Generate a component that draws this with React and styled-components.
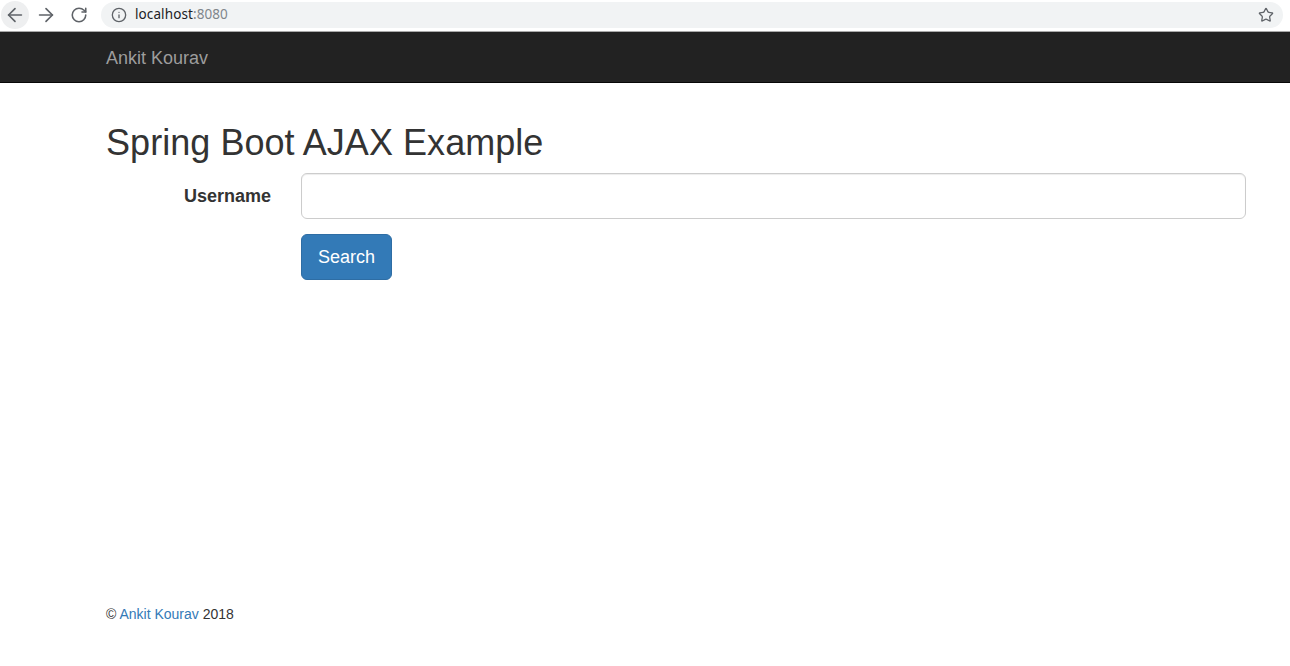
import React from 'react';
import styled, { createGlobalStyle } from 'styled-components';
import { ArrowLeft, ArrowRight, RotateCw, Info, Star } from 'lucide-react';

const GlobalStyle = createGlobalStyle`
    html, body {
        margin: 0;
        padding: 0;
        background: #fff;
    }
    body {
        font-family: "Liberation Sans", Arial, sans-serif;
        font-size: 14px;
        line-height: 1.42857143;
        color: #333;
    }
    * {
        box-sizing: border-box;
    }
`;

const Page = styled.div`
    min-height: 100vh;
    display: flex;
    flex-direction: column;
`;

const BrowserBar = styled.div`
    height: 32px;
    display: flex;
    align-items: center;
    gap: 3px;
    padding: 0 7px 1px 1px;
    background: #fff;
    border-bottom: 1px solid #a9a9a9;
`;

const NavButton = styled.div`
    width: 28px;
    height: 28px;
    border-radius: 50%;
    display: flex;
    align-items: center;
    justify-content: center;
    color: #5f6368;
    flex-shrink: 0;
    background: ${(p) => (p.$active ? '#eeeff0' : 'transparent')};
    margin-left: ${(p) => p.$gap || 0}px;
`;

const Omnibox = styled.div`
    flex: 1;
    height: 26px;
    margin-left: 5px;
    border-radius: 13px;
    background: #f1f3f4;
    display: flex;
    align-items: center;
    padding: 0 9px 0 10px;
    color: #5f6368;
`;

const Url = styled.span`
    flex: 1;
    margin-left: 8px;
    font-family: "Noto Sans", "Open Sans", sans-serif;
    font-size: 13.5px;
    color: #202124;
    letter-spacing: 0.1px;
`;

const Port = styled.span`
    color: #80868b;
`;

const Navbar = styled.nav`
    height: 51px;
    background: #222;
    border-bottom: 1px solid #080808;
    margin-bottom: 20px;
`;

const Container = styled.div`
    width: 1170px;
    margin-left: 91px;
    padding: 0 15px;
`;

const Brand = styled.a`
    display: inline-block;
    padding: 16px 0 14px;
    font-size: 18px;
    line-height: 20px;
    color: #9d9d9d;
    text-decoration: none;
`;

const Main = styled.main`
    flex: 1;
`;

const Title = styled.h1`
    margin: 20px 0 10px;
    font-size: 36px;
    font-weight: 500;
    line-height: 1.1;
    color: #333;
    letter-spacing: 0.05px;
`;

const FormGroup = styled.div`
    display: grid;
    grid-template-columns: 195px 1fr;
    margin: 0 -15px 15px;
`;

const Label = styled.label`
    padding: 11px 15px 0;
    text-align: right;
    font-size: 18px;
    font-weight: 700;
    line-height: 1.3333333;
`;

const Field = styled.div`
    grid-column: 2;
    padding: 0 15px;
`;

const Input = styled.input`
    display: block;
    width: 100%;
    height: 46px;
    padding: 10px 16px;
    font-family: inherit;
    font-size: 18px;
    line-height: 1.3333333;
    color: #555;
    background: #fff;
    border: 1px solid #ccc;
    border-radius: 6px;
    box-shadow: inset 0 1px 1px rgba(0, 0, 0, 0.075);
    outline: none;
`;

const Button = styled.button`
    display: inline-block;
    padding: 10px 16px;
    font-family: inherit;
    font-size: 18px;
    line-height: 1.3333333;
    color: #fff;
    background: #337ab7;
    border: 1px solid #2e6da4;
    border-radius: 6px;
    cursor: pointer;
`;

const Footer = styled.footer`
    padding-bottom: 42px;
    line-height: 20px;
`;

const Link = styled.a`
    color: #337ab7;
    text-decoration: none;
`;

const App = () => (
    <Page>
        <GlobalStyle />
        <BrowserBar>
            <NavButton $active>
                <ArrowLeft size={22} strokeWidth={1.8} />
            </NavButton>
            <NavButton>
                <ArrowRight size={22} strokeWidth={1.8} />
            </NavButton>
            <NavButton $gap={2}>
                <RotateCw size={18} strokeWidth={2.1} />
            </NavButton>
            <Omnibox>
                <Info size={16} strokeWidth={2} />
                <Url>
                    localhost<Port>:8080</Port>
                </Url>
                <Star size={16} strokeWidth={1.9} />
            </Omnibox>
        </BrowserBar>

        <Navbar>
            <Container>
                <Brand href="#">Ankit Kourav</Brand>
            </Container>
        </Navbar>

        <Main>
            <Container>
                <Title>Spring Boot AJAX Example</Title>
                <form onSubmit={(e) => e.preventDefault()}>
                    <FormGroup>
                        <Label htmlFor="username">Username</Label>
                        <Field>
                            <Input id="username" type="text" />
                        </Field>
                    </FormGroup>
                    <FormGroup>
                        <Field>
                            <Button type="submit">Search</Button>
                        </Field>
                    </FormGroup>
                </form>
            </Container>
        </Main>

        <Footer>
            <Container>
                © <Link href="#">Ankit Kourav</Link> 2018
            </Container>
        </Footer>
    </Page>
);

export default App;
